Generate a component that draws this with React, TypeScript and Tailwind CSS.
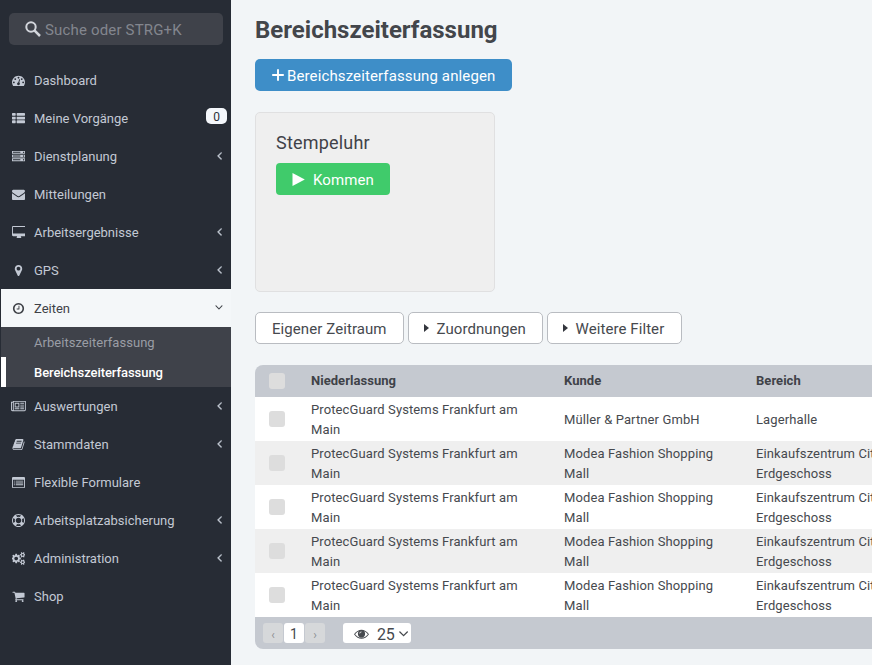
import React from "react";

const listRow = "v192q0 40-28 68t-68 28h-320q-40 0-68-28t-28-68v-192q0-40 28-68t68-28h320q40 0 68 28t28 68z";
const listBar = "v192q0 40-28 68t-68 28h-960q-40 0-68-28t-28-68v-192q0-40 28-68t68-28h960q40 0 68 28t28 68z";
const smallCog =
  "v140q0 16-149 31-12 27-30 52 51 113 51 138 0 4-4 7-122 71-124 71-8 0-46-47t-52-68q-20 2-30 2t-30-2q-14 21-52 68t-46 47q-2 0-124-71-4-3-4-7 0-25 51-138-18-25-30-52-149-15-149-31v-140q0-16 149-31 13-29 30-52-51-113-51-138 0-4 4-7 4-2 35-20t59-34 30-16q8 0 46 46.5t52 67.5q20-2 30-2t30 2q51-71 92-112l6-2q4 0 124 70 4 3 4 7 0 25-51 138 17 23 30 52 149 15 149 31z";

const paths = {
  gauge:
    "M384 1152q0-53-37.5-90.5t-90.5-37.5-90.5 37.5-37.5 90.5 37.5 90.5 90.5 37.5 90.5-37.5 37.5-90.5zm192-448q0-53-37.5-90.5t-90.5-37.5-90.5 37.5-37.5 90.5 37.5 90.5 90.5 37.5 90.5-37.5 37.5-90.5zm428 481l101-382q6-26-7.5-48.5t-38.5-29.5-48 6.5-30 39.5l-101 382q-60 5-107 43.5t-63 98.5q-20 77 20 146t117 89 146-20 89-117q16-60-6-117t-72-91zm660-33q0-53-37.5-90.5t-90.5-37.5-90.5 37.5-37.5 90.5 37.5 90.5 90.5 37.5 90.5-37.5 37.5-90.5zm-640-640q0-53-37.5-90.5t-90.5-37.5-90.5 37.5-37.5 90.5 37.5 90.5 90.5 37.5 90.5-37.5 37.5-90.5zm448 192q0-53-37.5-90.5t-90.5-37.5-90.5 37.5-37.5 90.5 37.5 90.5 90.5 37.5 90.5-37.5 37.5-90.5zm320 448q0 261-141 483-19 29-54 29h-1402q-35 0-54-29-141-221-141-483 0-182 71-348t191-286 286-191 348-71 348 71 286 191 191 286 71 348z",
  list: `M512 1248${listRow}M512 736${listRow}M512 224${listRow}M1792 1248${listBar}M1792 736${listBar}M1792 224${listBar}`,
  server:
    "M128 1408h1024v-128h-1024v128zm0-512h1024v-128h-1024v128zm1568 448q0-40-28-68t-68-28-68 28-28 68 28 68 68 28 68-28 28-68zm-1568-960h1024v-128h-1024v128zm1568 448q0-40-28-68t-68-28-68 28-28 68 28 68 68 28 68-28 28-68zm0-512q0-40-28-68t-68-28-68 28-28 68 28 68 68 28 68-28 28-68zm96 832v384h-1792v-384h1792zm0-512v384h-1792v-384h1792zm0-512v384h-1792v-384h1792z",
  mail: "M1792 710v794q0 66-47 113t-113 47h-1472q-66 0-113-47t-47-113v-794q44 49 101 87 362 246 497 345 57 42 92.5 65.5t94.5 48 110 24.5h2q51 0 110-24.5t94.5-48 92.5-65.5q170-123 498-345 57-39 100-87zm0-294q0 79-49 151t-122 123q-376 261-468 325-10 7-42.5 31t-54 38.5-52 32.5-57.5 27-50 9h-2q-23 0-50-9t-57.5-27-52-32.5-54-38.5-42.5-31q-91-64-262-182.5t-205-142.5q-62-42-117-115.5t-55-136.5q0-78 41.5-130t118.5-52h1472q65 0 112.5 47t47.5 113z",
  desktop:
    "M1728 992v-832q0-13-9.5-22.5t-22.5-9.5h-1600q-13 0-22.5 9.5t-9.5 22.5v832q0 13 9.5 22.5t22.5 9.5h1600q13 0 22.5-9.5t9.5-22.5zm128-832v1088q0 66-47 113t-113 47h-544q0 37 16 77.5t32 71 16 43.5q0 26-19 45t-45 19h-512q-26 0-45-19t-19-45q0-14 16-44t32-70 16-78h-544q-66 0-113-47t-47-113v-1088q0-66 47-113t113-47h1600q66 0 113 47t47 113z",
  pin: "M1152 640q0-106-75-181t-181-75-181 75-75 181 75 181 181 75 181-75 75-181zm256 0q0 109-33 179l-364 774q-16 33-47.5 52t-67.5 19-67.5-19-46.5-52l-365-774q-33-70-33-179 0-212 150-362t362-150 362 150 150 362z",
  clock:
    "M1024 544v448q0 14-9 23t-23 9h-320q-14 0-23-9t-9-23v-64q0-14 9-23t23-9h224v-352q0-14 9-23t23-9h64q14 0 23 9t9 23zm416 352q0-148-73-273t-198-198-273-73-273 73-198 198-73 273 73 273 198 198 273 73 273-73 198-198 73-273zm224 0q0 209-103 385.5t-279.5 279.5-385.5 103-385.5-103-279.5-279.5-103-385.5 103-385.5 279.5-279.5 385.5-103 385.5 103 279.5 279.5 103 385.5z",
  news: "M1024 512h-384v384h384v-384zm128 640v128h-640v-128h640zm0-768v640h-640v-640h640zm640 768v128h-512v-128h512zm0-256v128h-512v-128h512zm0-256v128h-512v-128h512zm0-256v128h-512v-128h512zm-1536 960v-960h-128v960q0 26 19 45t45 19 45-19 19-45zm1664 0v-1088h-1536v1088q0 33-11 64h1483q26 0 45-19t19-45zm128-1216v1216q0 80-56 136t-136 56h-1664q-80 0-136-56t-56-136v-1088h256v-128h1792z",
  book: "M1703 478q40 57 18 129l-275 906q-19 64-76.5 107.5t-122.5 43.5h-923q-77 0-148.5-53.5t-99.5-131.5q-24-67-2-127 0-4 3-27t4-37q1-8-3-21.5t-3-19.5q2-11 8-21t16.5-23.5 16.5-23.5q23-38 45-91.5t30-91.5q3-10 .5-30t-.5-28q3-11 17-28t17-23q21-36 42-92t25-90q1-9-2.5-32t.5-28q4-13 22-30.5t22-22.5q19-26 42.5-84.5t27.5-96.5q1-8-3-25.5t-2-26.5q2-8 9-18t18-23 17-21q8-12 16.5-30.5t15-35 16-36 19.5-32 26.5-23.5 36-11.5 47.5 5.5l-1 3q38-9 51-9h761q74 0 114 56t18 130l-274 906q-36 119-71.5 153.5t-128.5 34.5h-869q-27 0-38 15-11 16-1 43 24 70 144 70h923q29 0 56-15.5t35-41.5l300-987q7-22 5-57 38 15 59 43zm-1064 2q-4 13 2 22.5t20 9.5h608q13 0 25.5-9.5t16.5-22.5l21-64q4-13-2-22.5t-20-9.5h-608q-13 0-25.5 9.5t-16.5 22.5zm-83 256q-4 13 2 22.5t20 9.5h608q13 0 25.5-9.5t16.5-22.5l21-64q4-13-2-22.5t-20-9.5h-608q-13 0-25.5 9.5t-16.5 22.5z",
  form: "M160 128h1472q66 0 113 47t47 113v1216q0 66-47 113t-113 47h-1472q-66 0-113-47t-47-113v-1216q0-66 47-113t113-47zM128 512v992q0 32 32 32h1472q32 0 32-32v-992zM256 640h128v128h-128zM512 640h1024v128h-1024zM256 896h128v128h-128zM512 896h1024v128h-1024zM256 1152h128v128h-128zM512 1152h1024v128h-1024z",
  ring: "M896 0q182 0 348 71t286 191 191 286 71 348-71 348-191 286-286 191-348 71-348-71-286-191-191-286-71-348 71-348 191-286 286-191 348-71zm0 128q-190 0-361 90l194 194q82-28 167-28t167 28l194-194q-171-90-361-90zm-678 1129l194-194q-28-82-28-167t28-167l-194-194q-90 171-90 361t90 361zm678 407q190 0 361-90l-194-194q-82 28-167 28t-167-28l-194 194q171 90 361 90zm0-384q159 0 271.5-112.5t112.5-271.5-112.5-271.5-271.5-112.5-271.5 112.5-112.5 271.5 112.5 271.5 271.5 112.5zm484-217l194 194q90-171 90-361t-90-361l-194 194q28 82 28 167t-28 167z",
  cogs: `M832 896q0-106-75-181t-181-75-181 75-75 181 75 181 181 75 181-75 75-181zm768 512q0-52-38-90t-90-38-90 38-38 90q0 53 37.5 90.5t90.5 37.5 90.5-37.5 37.5-90.5zm0-1024q0-52-38-90t-90-38-90 38-38 90q0 53 37.5 90.5t90.5 37.5 90.5-37.5 37.5-90.5zm-384 421v185q0 10-7 19.5t-16 10.5l-155 24q-11 35-32 76 34 48 90 115 7 11 7 20 0 12-7 19-23 30-82.5 89.5t-78.5 59.5q-11 0-21-7l-115-90q-37 19-77 31-11 108-23 155-7 24-30 24h-186q-11 0-20-7.5t-10-17.5l-23-153q-34-10-75-31l-118 89q-7 7-20 7-11 0-21-8-144-133-144-160 0-9 7-19 10-14 41-53t47-61q-23-44-35-82l-152-24q-10-1-17-9.5t-7-19.5v-185q0-10 7-19.5t16-10.5l155-24q11-35 32-76-34-48-90-115-7-11-7-20 0-12 7-20 22-30 82-89t79-59q11 0 21 7l115 90q34-18 77-32 11-108 23-154 7-24 30-24h186q11 0 20 7.5t10 17.5l23 153q34 10 75 31l118-89q8-7 20-7 11 0 21 8 144 133 144 160 0 8-7 19-12 16-42 54t-45 60q23 48 34 82l152 23q10 2 17 10.5t7 19.5zM1856 1338${smallCog}M1856 314${smallCog}`,
  cart: "M704 1536q0 52-38 90t-90 38-90-38-38-90 38-90 90-38 90 38 38 90zm896 0q0 52-38 90t-90 38-90-38-38-90 38-90 90-38 90 38 38 90zm128-1088v512q0 24-16.5 42.5t-40.5 21.5l-1044 122q13 60 13 70 0 16-24 64h920q26 0 45 19t19 45-19 45-45 19h-1024q-26 0-45-19t-19-45q0-11 8-31.5t16-36 21.5-40 15.5-29.5l-177-823h-204q-26 0-45-19t-19-45 19-45 45-19h256q16 0 28.5 6.5t19.5 15.5 13 24.5 8 26 5.5 29.5 4.5 26h1201q26 0 45 19t19 45z",
  eye: "M0 928Q400 384 896 384T1792 928Q1392 1472 896 1472T0 928zM130 928Q460 1350 896 1350T1662 928Q1480 680 1220 570Q1330 700 1330 870A434 434 0 0 1 462 870Q462 700 572 570Q312 680 130 928zM640 850A256 256 0 0 1 896 594V680A170 170 0 0 0 726 850z",
  angle:
    "M1203 544q0 13-10 23l-393 393 393 393q10 10 10 23t-10 23l-50 50q-10 10-23 10t-23-10l-466-466q-10-10-10-23t10-23l466-466q10-10 23-10t23 10l50 50q10 10 10 23z",
};

type IconName = keyof typeof paths;

const viewBoxes: Partial<Record<IconName, string>> = {
  desktop: "-64 0 1920 1792",
  news: "0 0 2048 1792",
  cogs: "0 0 1920 1792",
};

function Icon({ name, className }: { name: IconName; className: string }) {
  const evenOdd = name === "form" || name === "eye";
  return (
    <svg viewBox={viewBoxes[name] ?? "0 0 1792 1792"} className={className} fill="currentColor" fillRule={evenOdd ? "evenodd" : "nonzero"}>
      <path d={paths[name]} />
    </svg>
  );
}

type Item = { icon: IconName; label: string; arrow?: boolean; badge?: string; active?: boolean };

const topItems: Item[] = [
  { icon: "gauge", label: "Dashboard" },
  { icon: "list", label: "Meine Vorgänge", badge: "0" },
  { icon: "server", label: "Dienstplanung", arrow: true },
  { icon: "mail", label: "Mitteilungen" },
  { icon: "desktop", label: "Arbeitsergebnisse", arrow: true },
  { icon: "pin", label: "GPS", arrow: true },
  { icon: "clock", label: "Zeiten", arrow: true, active: true },
];

const bottomItems: Item[] = [
  { icon: "news", label: "Auswertungen", arrow: true },
  { icon: "book", label: "Stammdaten", arrow: true },
  { icon: "form", label: "Flexible Formulare" },
  { icon: "ring", label: "Arbeitsplatzabsicherung", arrow: true },
  { icon: "cogs", label: "Administration", arrow: true },
  { icon: "cart", label: "Shop" },
];

function NavItem({ icon, label, arrow, badge, active }: Item) {
  return (
    <a
      className={
        active
          ? "ml-px flex h-[38px] items-center bg-[#f4f7f9] pl-[9.5px] text-[#3f4248]"
          : "ml-px flex h-[38px] items-center pl-[9.5px] text-[#c3c9d4]"
      }
    >
      <span className="flex w-[16px] shrink-0 justify-center">
        <Icon name={icon} className="h-[13px] w-auto" />
      </span>
      <span className="ml-[7.5px] grow pt-[2px] text-[13px]">{label}</span>
      {badge && (
        <span className="mr-1 mb-[5px] flex h-4 w-[21px] items-center justify-center rounded-[5px] bg-[#f4f7fb] pt-[2px] text-[12px] text-[#2b2f38]">
          {badge}
        </span>
      )}
      {arrow && (
        <Icon
          name="angle"
          className={active ? "mr-[6px] mb-px size-[13px] -rotate-90" : "mr-[5.5px] mb-[2px] size-[13px] stroke-current stroke-[60]"}
        />
      )}
    </a>
  );
}

function Sidebar() {
  return (
    <aside className="h-full w-[231px] shrink-0 bg-[#272c35]">
      <div className="mt-[13px] mr-2 mb-4 ml-[9px] flex h-8 items-center rounded-[5px] bg-[#3f424a] pl-[16px]">
        <svg viewBox="0 0 16 16" className="mb-px size-4 text-[#d3d6dc]" fill="none" stroke="currentColor">
          <circle cx="6" cy="6" r="4.7" strokeWidth="2" />
          <path d="M9.4 9.4L15 15" strokeWidth="2.5" />
        </svg>
        <span className="ml-1 pt-[2px] text-[15px] tracking-[0.17px] text-[#83868e]">Suche oder STRG+K</span>
      </div>
      <nav>
        {topItems.map((item) => (
          <NavItem key={item.label} {...item} />
        ))}
        <div className="ml-px h-[60px] bg-[#3f424a] text-[13px]">
          <a className="flex h-[30px] items-center pt-[2px] pl-[33px] tracking-[0.04px] text-[#9a9da5]">Arbeitszeiterfassung</a>
          <a className="flex h-[30px] items-center border-l-[5px] border-white pt-[2px] pl-[28px] font-medium tracking-[-0.06px] text-white">
            Bereichszeiterfassung
          </a>
        </div>
        {bottomItems.map((item) => (
          <NavItem key={item.label} {...item} />
        ))}
      </nav>
    </aside>
  );
}

const modea = ["Modea Fashion Shopping Mall", "Einkaufszentrum City", "Erdgeschoss"];
const rows = [["Müller & Partner GmbH", "Lagerhalle", ""], modea, modea, modea, modea];

function Box() {
  return <span className="ml-[14px] size-4 rounded-[3px] bg-[#dddddd]" />;
}

function Table() {
  return (
    <section className="mt-[21px] w-[760px] overflow-hidden rounded-lg text-[13px] leading-5 tracking-[0.11px] text-[#46494e]">
      <header className="grid h-8 grid-cols-[56px_253px_192px_1fr] items-center bg-[#c5c9d0] font-bold tracking-[0.04px] text-[#3f4248]">
        <Box />
        <span>Niederlassung</span>
        <span>Kunde</span>
        <span>Bereich</span>
      </header>
      {rows.map(([customer, area, floor], i) => (
        <div key={i} className="grid h-11 grid-cols-[56px_253px_192px_1fr] items-center even:bg-white odd:bg-[#efefef]">
          <Box />
          <span className="w-[225px] pt-[2px]">ProtecGuard Systems Frankfurt am Main</span>
          <span className="w-[165px] pt-[2px]">{customer}</span>
          <span className="pt-[2px]">
            {area}
            {floor && <span className="block">{floor}</span>}
          </span>
        </div>
      ))}
      <footer className="flex h-8 items-center bg-[#c5c9d0] pl-2">
        <span className="flex h-5 w-5 items-center justify-center rounded-[3px] bg-[#d6d8da] pt-[3px] text-[12px] text-[#8d9095]">‹</span>
        <span className="ml-px flex h-5 w-5 items-center justify-center rounded-[3px] bg-white pt-px text-[14px]">1</span>
        <span className="ml-px flex h-5 w-5 items-center justify-center rounded-[3px] bg-[#d6d8da] pt-[3px] text-[12px] text-[#8d9095]">›</span>
        <span className="ml-[18px] flex h-5 w-[68px] items-center rounded-[3px] bg-white pl-[11px] text-[16px] tracking-[-0.2px]">
          <Icon name="eye" className="mt-px h-4 w-[15px]" />
          <span className="ml-2 pt-[3px]">25</span>
          <Icon name="angle" className="mt-px size-4 -rotate-90" />
        </span>
      </footer>
    </section>
  );
}

function FilterButton({ label, width, caret }: { label: string; width: string; caret?: boolean }) {
  return (
    <button className={`${width} flex h-8 items-center rounded-[5px] border border-[#b9bcc1] bg-white text-[15px] tracking-[0.08px] text-[#46494e]`}>
      {caret && <span className="mr-[7.5px] h-0 w-0 border-y-[4.5px] border-l-[5px] border-y-transparent border-l-[#33363d]" />}
      <span className="pt-[2px]">{label}</span>
    </button>
  );
}

export default function App() {
  return (
    <div className="flex h-[665px] w-[872px] overflow-hidden bg-[#f2f5f7] font-[Roboto,sans-serif]">
      <Sidebar />
      <main className="min-w-0 grow overflow-hidden pl-6">
        <h1 className="mt-[14px] h-[45px] text-[24px] leading-8 font-bold text-[#43464b]">Bereichszeiterfassung</h1>
        <button className="flex h-8 w-[257px] items-center rounded-[5px] bg-[#3e8ec8] pl-[16.5px] text-[15px] tracking-[0.12px] text-white">
          <svg viewBox="0 0 12 12" className="mr-[3.5px] size-3" stroke="currentColor" strokeWidth="1.9">
            <path d="M6 0.2v11.6M0.2 6h11.6" />
          </svg>
          <span className="pt-[2px]">Bereichszeiterfassung anlegen</span>
        </button>
        <div className="mt-[21px] h-[180px] w-[240px] rounded-[5px] border border-[#e0e0e1] bg-[#efefef] pt-[18px] pl-5">
          <h2 className="h-8 text-[18px] leading-6 tracking-[0.2px] text-[#3f4248]">Stempeluhr</h2>
          <button className="flex h-8 w-[114px] items-center rounded-[4px] bg-[#40cb6b] pl-4 text-[15px] tracking-[0.08px] text-white">
            <svg viewBox="0 0 13 13" className="mr-2 size-[13px]" fill="currentColor">
              <path d="M0.5 0l12.3 6.5-12.3 6.5z" />
            </svg>
            <span className="pt-[2px]">Kommen</span>
          </button>
        </div>
        <div className="mt-5 flex gap-1">
          <FilterButton label="Eigener Zeitraum" width="w-[149px] pl-4" />
          <FilterButton label="Zuordnungen" width="w-[135px] pl-[15px]" caret />
          <FilterButton label="Weitere Filter" width="w-[135px] pl-[15px]" caret />
        </div>
        <Table />
      </main>
    </div>
  );
}
